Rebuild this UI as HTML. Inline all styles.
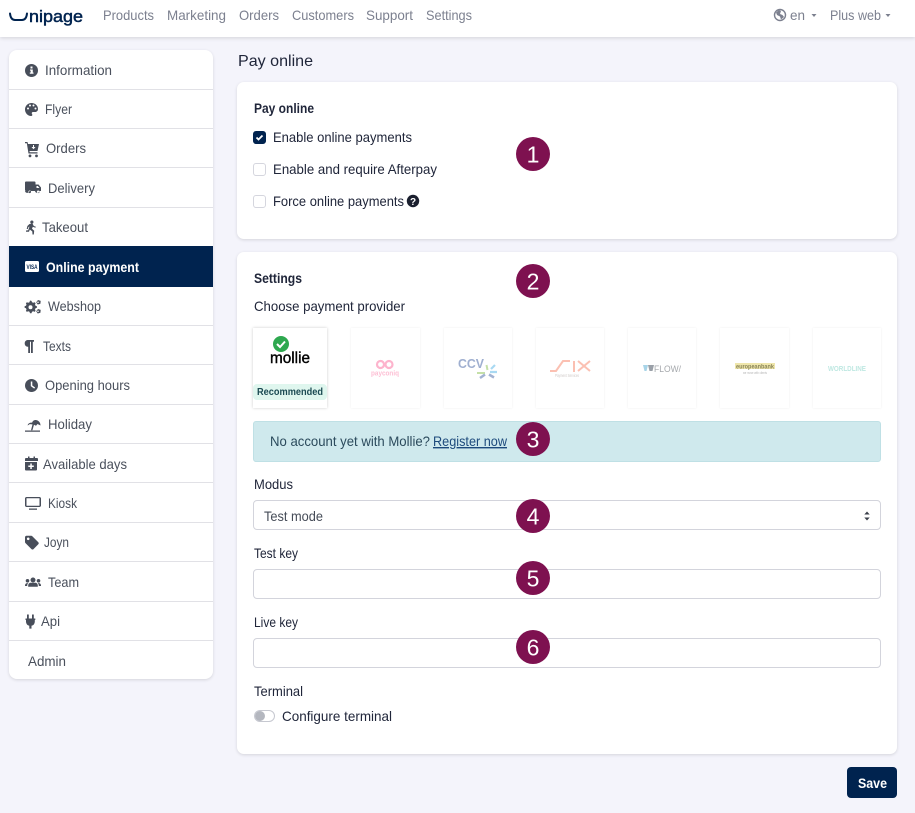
<!DOCTYPE html>
<html lang="en"><head><meta charset="utf-8"><title>Pay online</title>
<style>
html,body{margin:0;padding:0;width:915px;height:813px;overflow:hidden;background:#f4f4fb;font-family:"Liberation Sans",sans-serif}
.b{position:absolute;box-sizing:border-box}
svg{position:absolute;left:0;top:0}
text{font-family:"Liberation Sans",sans-serif;font-size:14px}
.nav{fill:#7c808f}
.side{fill:#4a505c}
.dark{fill:#20263a}
.bold{font-weight:700}
.num{font-size:23px;fill:#fff;text-anchor:middle}
.sep{fill:#e1e1e6}
.ic{fill:#484e5a}
</style></head><body>
<div class="b" style="left:0;top:0;width:915px;height:37px;background:#fff;box-shadow:0 1px 4px rgba(0,0,0,.14)"></div>
<div class="b" style="left:9px;top:50px;width:204px;height:629px;background:#fff;border-radius:8px;box-shadow:0 1px 3px rgba(0,0,0,.13)"></div>
<div class="b" style="left:237px;top:82px;width:660px;height:157px;background:#fff;border-radius:7px;box-shadow:0 1px 3px rgba(0,0,0,.13)"></div>
<div class="b" style="left:237px;top:252px;width:660px;height:502px;background:#fff;border-radius:7px;box-shadow:0 1px 3px rgba(0,0,0,.13)"></div>

<div class="b" style="left:9px;top:246px;width:204px;height:41px;background:#00234f"></div>

<div class="b" style="left:253px;top:131px;width:13px;height:13px;background:#00234f;border-radius:3px"></div>
<div class="b" style="left:253px;top:163px;width:13px;height:13px;background:#fff;border:1px solid #d5d6de;border-radius:3px"></div>
<div class="b" style="left:253px;top:195px;width:13px;height:13px;background:#fff;border:1px solid #d5d6de;border-radius:3px"></div>

<div class="b" style="left:253px;top:328px;width:74px;height:80px;background:#fff;box-shadow:0 0 3px rgba(0,0,0,.2)"></div>
<div class="b" style="left:351px;top:328px;width:69px;height:80px;background:#fff;box-shadow:0 0 2px rgba(0,0,0,.08)"></div>
<div class="b" style="left:444px;top:328px;width:68px;height:80px;background:#fff;box-shadow:0 0 2px rgba(0,0,0,.08)"></div>
<div class="b" style="left:536px;top:328px;width:68px;height:80px;background:#fff;box-shadow:0 0 2px rgba(0,0,0,.08)"></div>
<div class="b" style="left:628px;top:328px;width:68px;height:80px;background:#fff;box-shadow:0 0 2px rgba(0,0,0,.08)"></div>
<div class="b" style="left:720px;top:328px;width:69px;height:80px;background:#fff;box-shadow:0 0 2px rgba(0,0,0,.08)"></div>
<div class="b" style="left:813px;top:328px;width:68px;height:80px;background:#fff;box-shadow:0 0 2px rgba(0,0,0,.08)"></div>
<div class="b" style="left:253px;top:384px;width:74px;height:16px;background:#dff6ee;border-radius:4px"></div>

<div class="b" style="left:253px;top:421px;width:628px;height:41px;background:#cfe9ed;border:1px solid #bfe0e5;border-radius:3px"></div>
<div class="b" style="left:253px;top:500px;width:628px;height:30px;background:#fff;border:1px solid #d3d4dc;border-radius:4px"></div>
<div class="b" style="left:253px;top:569px;width:628px;height:30px;background:#fff;border:1px solid #d3d4dc;border-radius:4px"></div>
<div class="b" style="left:253px;top:638px;width:628px;height:30px;background:#fff;border:1px solid #d3d4dc;border-radius:4px"></div>
<div class="b" style="left:254px;top:710px;width:21px;height:12px;background:#fff;border:1px solid #c6c8d0;border-radius:6px"></div>
<div class="b" style="left:255px;top:711px;width:10px;height:10px;background:#b4b7bf;border-radius:50%"></div>
<div class="b" style="left:847px;top:767px;width:50px;height:31px;background:#00234f;border-radius:4px"></div>

<svg width="915" height="813" viewBox="0 0 915 813" xmlns="http://www.w3.org/2000/svg">
<!-- logo -->
<path d="M10 13.500C10.500 18 12 20 15 20H22C25 20 26.500 18 27 13.500" fill="none" stroke="#00234f" stroke-width="2" stroke-linecap="round"/>
<text x="29" y="22" textLength="54" lengthAdjust="spacingAndGlyphs" style="font-size:17px;fill:#00234f;stroke:#00234f;stroke-width:.5">nipage</text>
<!-- top nav -->
<text x="103" y="20" textLength="51" lengthAdjust="spacingAndGlyphs" class="nav">Products</text>
<text x="167" y="20" textLength="59" lengthAdjust="spacingAndGlyphs" class="nav">Marketing</text>
<text x="239" y="20" textLength="40" lengthAdjust="spacingAndGlyphs" class="nav">Orders</text>
<text x="292" y="20" textLength="62" lengthAdjust="spacingAndGlyphs" class="nav">Customers</text>
<text x="366" y="20" textLength="47" lengthAdjust="spacingAndGlyphs" class="nav">Support</text>
<text x="426" y="20" textLength="46" lengthAdjust="spacingAndGlyphs" class="nav">Settings</text>
<circle cx="780" cy="15" r="5.500" fill="none" stroke="#7c808f" stroke-width="1.400"/>
<path d="M776 12.500l3-2.500 2 1-1 3 2.500 1 1.500 2-3 2.500-1-3-3-1.500z" fill="#7c808f"/>
<text x="790" y="20" textLength="15" lengthAdjust="spacingAndGlyphs" class="nav">en</text>
<path d="M811.500 14h5l-2.500 3z" fill="#7c808f"/>
<text x="830" y="20" textLength="51" lengthAdjust="spacingAndGlyphs" class="nav">Plus web</text>
<path d="M885.500 14h5l-2.500 3z" fill="#7c808f"/>

<!-- sidebar separators -->
<g class="sep">
<rect x="9" y="89" width="204" height="1"/><rect x="9" y="128" width="204" height="1"/><rect x="9" y="167" width="204" height="1"/><rect x="9" y="207" width="204" height="1"/><rect x="9" y="325" width="204" height="1"/><rect x="9" y="364" width="204" height="1"/><rect x="9" y="404" width="204" height="1"/><rect x="9" y="443" width="204" height="1"/><rect x="9" y="482" width="204" height="1"/><rect x="9" y="522" width="204" height="1"/><rect x="9" y="561" width="204" height="1"/><rect x="9" y="601" width="204" height="1"/><rect x="9" y="640" width="204" height="1"/>
</g>
<!-- sidebar icons -->
<g class="ic">
<path fill-rule="evenodd" d="M31.500 64a6.500 6.500 0 1 0 0 13 6.500 6.500 0 0 0 0-13zM30.500 66.500h2v2h-2zM30 69.500h2.800v3h.7v1.200H29.800v-1.200h.9v-1.900H30z"/>
<path fill-rule="evenodd" d="M31.500 103c-3.600 0-6.500 2.900-6.500 6.500s2.900 6.500 6 6.500c1.500 0 1.600-1.200 1-2-.6-1 0-2 1.200-2h2c1.600 0 2.800-1.200 2.800-3 0-3.300-2.900-6-6.500-6zM28 109.500a1 1 0 1 1 0-2 1 1 0 0 1 0 2zM30 106.500a1 1 0 1 1 0-2 1 1 0 0 1 0 2zM33.500 106.500a1 1 0 1 1 0-2 1 1 0 0 1 0 2zM35.500 109.500a1 1 0 1 1 0-2 1 1 0 0 1 0 2z"/>
<path fill-rule="evenodd" d="M25 142h2.500l.5 2h11l-1.500 7H29.500l.2 1.200H37.500v1.300H28.500L26.800 143.300H25zM33 145v2h-1.500l2 2.300 2-2.300H34v-2zM30 154.500a1.400 1.400 0 1 0 0 2.800 1.400 1.400 0 0 0 0-2.800zM36.500 154.500a1.400 1.400 0 1 0 0 2.800 1.400 1.400 0 0 0 0-2.800z"/>
<path fill-rule="evenodd" d="M25 182.500c0-.6.400-1 1-1h8.500c.6 0 1 .4 1 1v2h3l2.500 3v3.500h-1.500a2.300 2.300 0 0 1-4.500 0h-5.500a2.300 2.300 0 0 1-4.500 0H26c-.6 0-1-.4-1-1zM36.500 186v2h3l-1.700-2zM29.700 190.500a1.300 1.300 0 1 0 0 2.600 1.300 1.300 0 0 0 0-2.600zM38.200 190.500a1.300 1.300 0 1 0 0 2.600 1.300 1.300 0 0 0 0-2.600z"/>
<path d="M31.800 220.500a1.600 1.600 0 1 1 .1 3.200 1.600 1.600 0 0 1-.1-3.200zM29.500 224l3-.4 1.300 2.400 2 .8-.4 1-2.600-1-.8 2 2.200 2-.4 3.700h-1.300l-.2-3-2.500-2-.8 2.200-3 .1v-1.300l2.200-.2 1.300-3.800-1 .5-.7 2h-1.100l.7-3z"/>
<rect x="25" y="261" width="14" height="11" rx="1.500" fill="#fff"/>
<text x="26.500" y="269" textLength="11" lengthAdjust="spacingAndGlyphs" class="bold" style="font-size:6px;fill:#00234f">VISA</text>
<path fill-rule="evenodd" d="M30 300.500l1.500.4.500 1.400 1.300.5 1.300-.6 1 1-.6 1.300.5 1.300 1.400.5v1.500l-1.400.5-.5 1.300.6 1.300-1 1-1.300-.6-1.300.5-.5 1.400h-1.500l-.5-1.400-1.300-.5-1.300.6-1-1 .6-1.300-.5-1.300-1.400-.5v-1.500l1.400-.5.500-1.300-.6-1.300 1-1 1.300.6 1.300-.5zM30.500 305.300a2 2 0 1 0 0 4 2 2 0 0 0 0-4z"/>
<path fill-rule="evenodd" d="M38 300l2.700.9-.3 2.800-2.700.8-1.500-2.200zM38 301.500a.8.800 0 1 0 0 1.600.8.800 0 0 0 0-1.600zM38 309l2.700.9-.3 2.800-2.700.8-1.500-2.200zM38 310.500a.8.800 0 1 0 0 1.600.8.800 0 0 0 0-1.600z"/>
<path d="M30.500 340h6.500v1.800h-1.200V353h-1.800v-11.200h-1V353h-1.800v-6.300h-.7a3.400 3.400 0 0 1 0-6.700z" transform="translate(-3)"/>
<path fill-rule="evenodd" d="M31.500 379a6.500 6.500 0 1 0 0 13 6.500 6.500 0 0 0 0-13zM30.800 381.500h1.500v4l2.800 2-.9 1.100-3.400-2.500z"/>
<path d="M25 430.500h15v1.300H25zM32 423c.5-2 2-3 3.500-3 2.500 0 5 2 5 5.500l-3-1.500-1.500 1.800-2-1-1.600 5.400H31l1.500-5.800-2.800-.3-2 1.400c0-1.600 1.900-3 4.300-2.800z"/>
<path fill-rule="evenodd" d="M27.500 458h2v-1.500h1.500v1.500h4v-1.500h1.500v1.500h2c.6 0 1 .4 1 1v2H26.500v-2c0-.6.400-1 1-1zM26.500 462H38.500v7.500c0 .6-.4 1-1 1h-10c-.6 0-1-.4-1-1zM31.800 463.500v2h-2v1.500h2v2h1.500v-2h2v-1.500h-2v-2z" transform="translate(-1.500)"/>
<path fill-rule="evenodd" d="M26.500 497h13c.8 0 1.500.7 1.500 1.500v7c0 .8-.7 1.500-1.500 1.500h-13c-.8 0-1.500-.7-1.500-1.500v-7c0-.8.700-1.500 1.500-1.500zM26.500 498.300v7.400h13v-7.400z"/>
<path d="M29 508.500h8v1.300h-8z"/>
<path fill-rule="evenodd" d="M25 536v5.500c0 .5.200.8.500 1.100l6 6c.6.600 1.500.6 2 0l4.800-4.800c.6-.6.600-1.500 0-2l-6-6c-.3-.3-.7-.5-1.100-.5H26.500c-.8 0-1.500.7-1.500 1.500zM28.200 537a1.300 1.300 0 1 0 0 2.600 1.300 1.300 0 0 0 0-2.600z" transform="translate(0,.5)"/>
<path d="M33 577.500a2.500 2.500 0 1 1 0 5 2.500 2.500 0 0 1 0-5zM29 583.500c.5-.6 1-.8 1.800-.8h4.400c.8 0 1.300.2 1.800.8.500.5.800 1.300.8 2v1.300H28.200v-1.300c0-.7.300-1.500.8-2zM27.500 579a1.800 1.800 0 1 1 0 3.600 1.800 1.800 0 0 1 0-3.600zM38.500 579a1.800 1.800 0 1 1 0 3.600 1.800 1.800 0 0 1 0-3.600zM25 585.500c0-1.300.8-2.400 2-2.400h1.300c-.7.700-1.100 1.600-1.100 2.400V586H25zM41 585.500c0-1.300-.8-2.400-2-2.400h-1.300c.7.700 1.100 1.600 1.100 2.400v.500H41z"/>
<path d="M27 614.500h1.800v4H27zM32 614.500h1.800v4H32zM25.500 618.500h9.800v1.500h-.5v1.800a4.300 4.300 0 0 1-3.300 4v2.800h-2.200v-2.800a4.300 4.300 0 0 1-3.300-4V620h-.5z"/>
</g>
<!-- sidebar text -->
<g class="side">
<text x="45" y="75" textLength="67" lengthAdjust="spacingAndGlyphs">Information</text>
<text x="45" y="114" textLength="27" lengthAdjust="spacingAndGlyphs">Flyer</text>
<text x="46" y="153" textLength="40" lengthAdjust="spacingAndGlyphs">Orders</text>
<text x="48" y="193" textLength="47" lengthAdjust="spacingAndGlyphs">Delivery</text>
<text x="42" y="232" textLength="46" lengthAdjust="spacingAndGlyphs">Takeout</text>
<text x="46" y="272" textLength="93" lengthAdjust="spacingAndGlyphs" style="fill:#fff;font-weight:700;font-size:13.500px">Online payment</text>
<text x="48" y="311" textLength="53" lengthAdjust="spacingAndGlyphs">Webshop</text>
<text x="43" y="351" textLength="28" lengthAdjust="spacingAndGlyphs">Texts</text>
<text x="45" y="390" textLength="85" lengthAdjust="spacingAndGlyphs">Opening hours</text>
<text x="48" y="429" textLength="44" lengthAdjust="spacingAndGlyphs">Holiday</text>
<text x="43" y="469" textLength="84" lengthAdjust="spacingAndGlyphs">Available days</text>
<text x="48" y="508" textLength="29" lengthAdjust="spacingAndGlyphs">Kiosk</text>
<text x="44" y="547" textLength="25" lengthAdjust="spacingAndGlyphs">Joyn</text>
<text x="48" y="587" textLength="31" lengthAdjust="spacingAndGlyphs">Team</text>
<text x="41" y="626" textLength="19" lengthAdjust="spacingAndGlyphs">Api</text>
<text x="28" y="666" textLength="38" lengthAdjust="spacingAndGlyphs">Admin</text>
</g>

<!-- main text -->
<text x="238" y="66" textLength="75" lengthAdjust="spacingAndGlyphs" class="dark" style="font-size:16px">Pay online</text>
<text x="254" y="113" textLength="60" lengthAdjust="spacingAndGlyphs" class="dark bold" style="font-size:13.500px">Pay online</text>
<path d="M256.500 137.500l2 2 4-4" fill="none" stroke="#fff" stroke-width="1.800"/>
<text x="273" y="142" textLength="139" lengthAdjust="spacingAndGlyphs" class="dark">Enable online payments</text>
<text x="273" y="174" textLength="164" lengthAdjust="spacingAndGlyphs" class="dark">Enable and require Afterpay</text>
<text x="273" y="206" textLength="131" lengthAdjust="spacingAndGlyphs" class="dark">Force online payments</text>
<circle cx="413" cy="201" r="6.200" fill="#1a1f2e"/>
<text x="413" y="205" text-anchor="middle" class="bold" style="font-size:10px;fill:#fff">?</text>

<text x="254" y="283" textLength="48" lengthAdjust="spacingAndGlyphs" class="dark bold" style="font-size:13.500px">Settings</text>
<text x="254" y="311" textLength="151" lengthAdjust="spacingAndGlyphs" class="dark">Choose payment provider</text>

<!-- mollie -->
<circle cx="281" cy="344" r="8" fill="#2ea84f"/>
<path d="M277 344l3 3 5-5.500" fill="none" stroke="#fff" stroke-width="2"/>
<text x="270" y="363" textLength="40" lengthAdjust="spacingAndGlyphs" style="font-size:16px;fill:#000;stroke:#000;stroke-width:.4">mollie</text>
<text x="257" y="395" textLength="66" lengthAdjust="spacingAndGlyphs" class="bold" style="font-size:10.500px;fill:#1b4a52">Recommended</text>
<!-- payconiq -->
<circle cx="380.500" cy="364.500" r="3.500" fill="none" stroke="#fdb4cd" stroke-width="2.200"/>
<circle cx="389" cy="364.500" r="3.500" fill="none" stroke="#fdb4cd" stroke-width="2.200"/>
<text x="371" y="375.500" textLength="28" lengthAdjust="spacingAndGlyphs" class="bold" style="font-size:7.500px;fill:#fdc0d5">payconiq</text>
<!-- ccv -->
<text x="458" y="368" textLength="26" lengthAdjust="spacingAndGlyphs" class="bold" style="font-size:12.500px;fill:#9fafd0">CCV</text>
<path d="M491 369l4-4M490 372h7" stroke="#a9d9f2" stroke-width="2.200" fill="none"/>
<path d="M477 373h8M486.500 365l1 5" stroke="#c5e0a8" stroke-width="2" fill="none"/>
<path d="M485 374.500l-5 3.500M489 374.500l5 3" stroke="#a3b3d2" stroke-width="2.500" fill="none"/>
<!-- six -->
<path d="M550 371h6l7-10h7M574 361v11M578 361l12 10M590 361l-12 10" fill="none" stroke="#fbc0b2" stroke-width="2"/>
<text x="555" y="377" textLength="24" lengthAdjust="spacingAndGlyphs" style="font-size:4.500px;fill:#cfc9c7">Payment Services</text>
<!-- flow -->
<path d="M643 365h5l-1.500 6h-2z" fill="#a8d4e8"/><path d="M648 365h6l-1.500 6h-3z" fill="#9aa0a8"/>
<text x="654" y="372" textLength="27" lengthAdjust="spacingAndGlyphs" style="font-size:9px;fill:#a5a8ac">FLOW/</text>
<!-- euro -->
<rect x="735" y="363" width="40" height="6" fill="#efe6ab"/>
<text x="736" y="368.500" textLength="38" lengthAdjust="spacingAndGlyphs" class="bold" style="font-size:6px;fill:#8a8558">europeanbank</text>
<text x="743" y="374" textLength="24" lengthAdjust="spacingAndGlyphs" style="font-size:4px;fill:#b5b5b5">we move with clients</text>
<!-- worldline -->
<text x="828" y="371" textLength="38" lengthAdjust="spacingAndGlyphs" class="bold" style="font-size:7px;fill:#bfe8e2">WORLDLINE</text>

<text x="270" y="446" textLength="160" lengthAdjust="spacingAndGlyphs" style="fill:#2b4a5c">No account yet with Mollie?</text>
<text x="433" y="446" textLength="74" lengthAdjust="spacingAndGlyphs" style="fill:#1d4a7c;text-decoration:underline">Register now</text>

<text x="254" y="489" textLength="39" lengthAdjust="spacingAndGlyphs" class="dark">Modus</text>
<text x="264" y="521" textLength="59" lengthAdjust="spacingAndGlyphs" style="fill:#464c58">Test mode</text>
<path d="M864.300 514.500l2.700-3 2.700 3zM864.300 517.500l2.700 3 2.700-3z" fill="#3a3f4a"/>
<text x="254" y="558" textLength="44" lengthAdjust="spacingAndGlyphs" class="dark">Test key</text>
<text x="254" y="627" textLength="44" lengthAdjust="spacingAndGlyphs" class="dark">Live key</text>
<text x="254" y="696" textLength="49" lengthAdjust="spacingAndGlyphs" class="dark">Terminal</text>
<text x="282" y="721" textLength="110" lengthAdjust="spacingAndGlyphs" class="dark">Configure terminal</text>
<text x="858" y="788" textLength="29" lengthAdjust="spacingAndGlyphs" class="bold" style="font-size:13.500px;fill:#fff">Save</text>

<!-- number badges -->
<g fill="#7e1150">
<circle cx="533" cy="154" r="17"/><circle cx="533" cy="281" r="17"/><circle cx="533" cy="439" r="17"/><circle cx="533" cy="516" r="17"/><circle cx="533" cy="578" r="17"/><circle cx="533" cy="647" r="17"/>
</g>
<text x="533" y="162.500" class="num">1</text>
<text x="533" y="289.500" class="num">2</text>
<text x="533" y="447.500" class="num">3</text>
<text x="533" y="524.500" class="num">4</text>
<text x="533" y="586.500" class="num">5</text>
<text x="533" y="655.500" class="num">6</text>
</svg>
</body></html>
